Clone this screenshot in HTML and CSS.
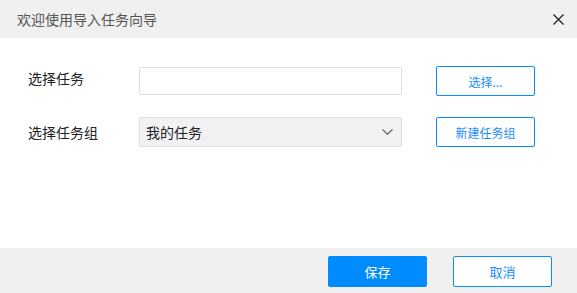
FILE: index.html
```html
<!DOCTYPE html>
<html lang="zh-CN">
<head>
  <meta charset="UTF-8">
  <title>欢迎使用导入任务向导</title>
  <link rel="stylesheet" href="styles.css">
</head>
<body>
  <div class="dialog">
    <div class="header">
      <span class="title">欢迎使用导入任务向导</span>
      <svg class="close" width="11" height="11" viewBox="0 0 11 11">
        <path d="M0.5 0.5 L10.5 10.5 M10.5 0.5 L0.5 10.5" stroke="#222" stroke-width="1.3" fill="none"/>
      </svg>
    </div>

    <div class="content">
      <label class="label label-first" for="task">选择任务</label>
      <input class="field" type="text" id="task">
      <button class="btn btn-outline">选择...</button>

      <label class="label">选择任务组</label>
      <div class="field select">
        <span>我的任务</span>
        <svg width="11" height="6" viewBox="0 0 11 6">
          <path d="M0.5 0.5 L5.5 5.3 L10.5 0.5" stroke="#666" stroke-width="1.2" fill="none"/>
        </svg>
      </div>
      <button class="btn btn-outline">新建任务组</button>
    </div>

    <div class="footer">
      <button class="btn btn-primary">保存</button>
      <button class="btn btn-outline">取消</button>
    </div>
  </div>
</body>
</html>
```

FILE: styles.css
```css
body {
  margin: 0;
  font-family: "Noto Sans CJK SC", "Noto Sans", sans-serif;
  background: #fff;
}
.dialog {
  width: 577px;
  height: 293px;
  display: flex;
  flex-direction: column;
}
.header {
  height: 38px;
  background: #f0f0f0;
  display: flex;
  align-items: center;
  justify-content: space-between;
  padding: 0 13px 0 17px;
}
.title {
  font-size: 14px;
  color: #555;
}
.content {
  flex: 1;
  display: grid;
  grid-template-columns: 77px 263px 99px;
  grid-auto-rows: 30px;
  column-gap: 34px;
  row-gap: 21px;
  align-items: center;
  align-content: start;
  padding: 28px 0 0 28px;
}
.label {
  font-size: 14px;
  color: #222;
  white-space: nowrap;
}
.label-first {
  margin-bottom: 6px;
}
.field {
  box-sizing: border-box;
  height: 28px;
  width: 100%;
  border: 1px solid #dcdfe8;
  border-radius: 2px;
  background: #fff;
  margin: 0;
}
.select {
  height: 30px;
  background: #f2f2f4;
  display: flex;
  align-items: center;
  justify-content: space-between;
  padding: 0 8px 0 6px;
  font-size: 14px;
  color: #222;
}
.btn {
  box-sizing: border-box;
  height: 30px;
  width: 99px;
  font-family: inherit;
  font-size: 12px;
  border-radius: 2px;
  cursor: pointer;
  padding: 0;
}
.btn-outline {
  background: #fff;
  border: 1px solid #0a8cff;
  color: #1a8cff;
}
.btn-primary {
  background: #008cff;
  border: 1px solid #008cff;
  color: #fff;
}
.footer {
  height: 45px;
  background: #f0f0f0;
  display: flex;
  justify-content: flex-end;
  align-items: flex-start;
  gap: 26px;
  padding: 8px 25px 0 0;
  box-sizing: border-box;
}
.footer .btn {
  height: 31px;
  font-size: 13px;
}
```
